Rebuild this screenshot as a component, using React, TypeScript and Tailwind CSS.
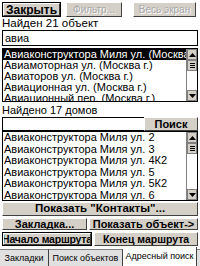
import React from 'react';

const streets = [
  'Авиаконструктора Миля ул. (Москва г.)',
  'Авиамоторная ул. (Москва г.)',
  'Авиаторов ул. (Москва г.)',
  'Авиационная ул. (Москва г.)',
  'Авиационный пер. (Москва г.)',
];

const houses = ['2', '3', '4К2', '5', '5К2', '6'].map((n) => `Авиаконструктора Миля ул. ${n}`);

function ScrollBar() {
  return (
    <div className="w-[11px] shrink-0 flex flex-col border-l border-[#808080] bg-white">
      <div className="h-[11px] bg-[#d4d0c8] border border-[#808080] flex items-center justify-center">
        <svg width="7" height="4" viewBox="0 0 7 4"><path d="M3.5 0L7 4H0z" fill="#000" /></svg>
      </div>
      <div className="h-[11px] bg-[#d4d0c8] border border-[#808080] flex flex-col items-center justify-center gap-[1px]">
        <div className="w-[5px] h-[1px] bg-black" />
        <div className="w-[5px] h-[1px] bg-black" />
        <div className="w-[5px] h-[1px] bg-black" />
      </div>
      <div className="flex-1" />
      <div className="h-[11px] bg-[#d4d0c8] border border-[#808080] flex items-center justify-center">
        <svg width="7" height="4" viewBox="0 0 7 4"><path d="M0 0H7L3.5 4z" fill="#000" /></svg>
      </div>
    </div>
  );
}

function Btn({ children, className = '' }: { children: React.ReactNode; className?: string }) {
  return (
    <div
      className={`bg-[#d4d0c8] border border-t-white border-l-white border-b-[#404040] border-r-[#404040] flex items-center justify-center whitespace-nowrap overflow-hidden leading-none ${className}`}
    >
      {children}
    </div>
  );
}

export default function App() {
  return (
    <div
      className="w-[200px] h-[266px] bg-white flex flex-col overflow-hidden text-black text-[11px] leading-none"
      style={{ fontFamily: '"Liberation Sans", Arial, sans-serif' }}
    >
      {/* top buttons */}
      <div className="flex items-center pt-[2px] px-[2px] h-[17px]">
        <div className="w-[59px] h-[15px] border border-black shrink-0">
          <Btn className="w-full h-full font-bold text-[12px]">Закрыть</Btn>
        </div>
        <Btn className="ml-[5px] w-[56px] shrink-0 h-[15px] text-[#a8a8a8] text-[10px] [text-shadow:1px_1px_0_#fff]">Фильтр...</Btn>
        <Btn className="ml-[11px] w-[63px] shrink-0 h-[15px] text-[#a8a8a8] text-[10px] [text-shadow:1px_1px_0_#fff]">Весь экран</Btn>
      </div>

      <div className="px-[2px] h-[11px] mt-[1px] flex items-end text-[11.5px]">Найден 21 объект</div>

      <div className="mx-[2px] mt-[1px] h-[16px] border border-black flex items-center px-[2px]">авиа</div>

      {/* street list */}
      <div className="mx-[2px] mt-[2px] h-[54px] border border-black flex overflow-hidden">
        <div className="flex-1 overflow-hidden">
          {streets.map((s, i) => (
            <div
              key={s}
              className={`h-[11px] flex items-center whitespace-nowrap pl-[1px] ${i === 0 ? 'bg-black text-white' : ''}`}
            >
              {s}
            </div>
          ))}
        </div>
        <ScrollBar />
      </div>

      <div className="px-[2px] h-[14px] flex items-end">Найдено 17 домов</div>

      <div className="mx-[2px] mt-[1px] flex h-[14px]">
        <div className="flex-1 border border-black border-r-0" />
        <Btn className="w-[54px] h-full font-bold">Поиск</Btn>
      </div>

      {/* houses list */}
      <div className="mx-[2px] h-[70px] border border-black flex overflow-hidden">
        <div className="flex-1 overflow-hidden">
          {houses.map((s) => (
            <div key={s} className="h-[11.5px] flex items-center whitespace-nowrap pl-[1px]">
              {s}
            </div>
          ))}
        </div>
        <ScrollBar />
      </div>

      <Btn className="mx-[2px] mt-[1px] h-[14px] font-bold text-[11.5px]">Показать "Контакты"...</Btn>

      <div className="mx-[2px] mt-[2px] flex gap-[2px] h-[12px]">
        <Btn className="w-[85px] h-full font-bold text-[11px]">Закладка...</Btn>
        <Btn className="flex-1 h-full font-bold text-[11px]">Показать объект-&gt;</Btn>
      </div>

      <div className="mx-[2px] mt-[2px] flex gap-[2px] h-[14px]">
        <div className="w-[90px] h-full border border-black">
          <Btn className="w-full h-full font-bold text-[10.5px] tracking-[-0.2px]">Начало маршрута</Btn>
        </div>
        <Btn className="flex-1 h-full font-bold text-[10.5px]">Конец маршрута</Btn>
      </div>

      {/* tabs */}
      <div className="flex-1 flex items-stretch mt-[3px] text-[9px] bg-[#e0e0e0]">
        <div className="w-[49px] border-r border-[#404040] border-t border-t-[#808080] flex items-center justify-center">Закладки</div>
        <div className="w-[74px] border-r border-[#404040] border-t border-t-[#808080] flex items-center justify-center whitespace-nowrap">Поиск объектов</div>
        <div className="w-[74px] bg-white border-r border-[#404040] -mt-[2px] flex items-center justify-center whitespace-nowrap">Адресный поиск</div>
        <div className="flex-1 border-t border-t-[#808080]" />
      </div>
    </div>
  );
}
